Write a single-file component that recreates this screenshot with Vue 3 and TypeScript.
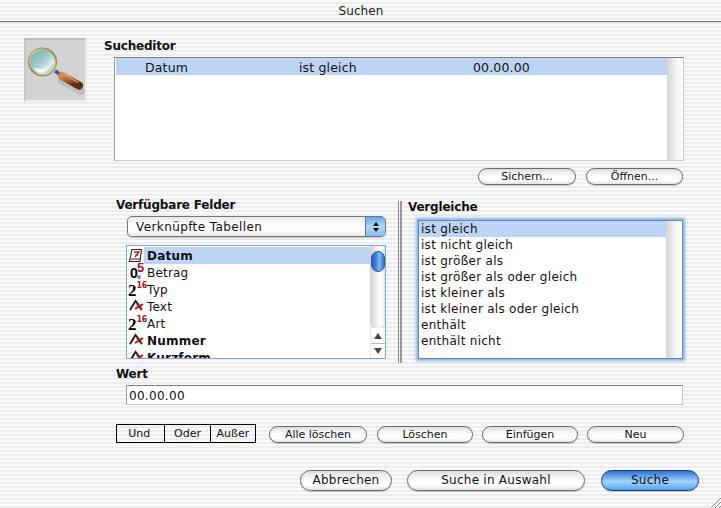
<script setup lang="ts">
type Kind = 'cal' | 'num' | 'int' | 'txt'
interface Field { name: string; kind: Kind; bold?: boolean; selected?: boolean }

const fields: Field[] = [
  { name: 'Datum', kind: 'cal', bold: true, selected: true },
  { name: 'Betrag', kind: 'num' },
  { name: 'Typ', kind: 'int' },
  { name: 'Text', kind: 'txt' },
  { name: 'Art', kind: 'int' },
  { name: 'Nummer', kind: 'txt', bold: true },
  { name: 'Kurzform', kind: 'txt', bold: true },
]

const comparisons = [
  'ist gleich',
  'ist nicht gleich',
  'ist größer als',
  'ist größer als oder gleich',
  'ist kleiner als',
  'ist kleiner als oder gleich',
  'enthält',
  'enthält nicht',
]

const logic = ['Und', 'Oder', 'Außer']
</script>

<template>
  <div class="window">
    <header class="titlebar">Suchen</header>

    <section class="top">
      <div class="icon-well">
        <svg width="63" height="63" viewBox="0 0 63 63">
          <defs>
            <linearGradient id="lens" x1="0" y1="0" x2="1" y2="1">
              <stop offset="0" stop-color="#6fa5a3" />
              <stop offset="0.45" stop-color="#9fc9cb" />
              <stop offset="0.7" stop-color="#d6ebeb" />
              <stop offset="1" stop-color="#7fadad" />
            </linearGradient>
            <linearGradient id="rim" x1="0" y1="0" x2="1" y2="1">
              <stop offset="0" stop-color="#f2e6a8" />
              <stop offset="0.5" stop-color="#a88f4a" />
              <stop offset="1" stop-color="#e8d68c" />
            </linearGradient>
            <linearGradient id="copper" x1="0" y1="0" x2="0.4" y2="1">
              <stop offset="0" stop-color="#d98a55" />
              <stop offset="0.6" stop-color="#a4562a" />
              <stop offset="1" stop-color="#5e2c12" />
            </linearGradient>
          </defs>
          <path d="M38 42 L57 53" stroke="#a4a4a4" stroke-width="8" stroke-linecap="round" opacity="0.45" />
          <path d="M31 33 L37 37" stroke="#2f5f9c" stroke-width="3.5" />
          <path d="M38 38 L55 47.5" stroke="url(#copper)" stroke-width="8" stroke-linecap="round" />
          <path d="M41 37 L54 44.5" stroke="#e6a77c" stroke-width="1.2" stroke-linecap="round" opacity="0.8" />
          <circle cx="18.5" cy="24" r="13.2" fill="url(#lens)" stroke="url(#rim)" stroke-width="1.7" />
          <circle cx="18.5" cy="24" r="14.2" fill="none" stroke="#6b5d30" stroke-width="0.6" />
          <path d="M9 29 Q18 34 27 27 Q21 36 13 34 Z" fill="#f4fafa" opacity="0.9" />
        </svg>
      </div>
      <div class="editor">
        <h2 class="label low">Sucheditor</h2>
        <div class="query-box">
          <div class="query-rows">
            <div class="query-row">
              <span class="q1">Datum</span>
              <span class="q2">ist gleich</span>
              <span class="q3">00.00.00</span>
            </div>
          </div>
          <div class="blank-scroll"></div>
        </div>
        <div class="editor-actions">
          <button class="btn small w98">Sichern...</button>
          <button class="btn small w97">Öffnen...</button>
        </div>
      </div>
    </section>

    <section class="middle">
      <div class="fields-col">
        <h2 class="label">Verfügbare Felder</h2>
        <div class="select">
          <span class="select-text">Verknüpfte Tabellen</span>
          <span class="select-arrows"><i class="tri up"></i><i class="tri down"></i></span>
        </div>
        <div class="field-list">
          <div class="field-rows">
            <div v-for="f in fields" :key="f.name" class="field-row">
              <span class="type-icon">
                <svg v-if="f.kind === 'cal'" width="18" height="17" viewBox="0 0 18 17">
                  <path d="M5 2.5H14.5L13 14.5H2.5Z" fill="#fff" stroke="#222" stroke-width="1.1" />
                  <path d="M4 12H13" stroke="#222" stroke-width="1" />
                  <path d="M7 5H12L8 10M8.5 8H11" fill="none" stroke="#b01818" stroke-width="1.3" />
                </svg>
                <span v-else-if="f.kind === 'num'" class="glyph-num">
                  <b>0</b><em>5</em><i class="dot"></i>
                </span>
                <span v-else-if="f.kind === 'int'" class="glyph-int">
                  <b>2</b><em>16</em>
                </span>
                <svg v-else width="18" height="17" viewBox="0 0 18 17">
                  <path d="M3 12 L8.5 3 L14 10" fill="none" stroke="#222" stroke-width="2" />
                  <path d="M8 11 L16 6 M10 6 L15 12" stroke="#a81818" stroke-width="2" />
                </svg>
              </span>
              <span class="field-name" :class="{ bold: f.bold, sel: f.selected }">{{ f.name }}</span>
            </div>
          </div>
          <div class="scrollbar">
            <div class="track"><div class="thumb"></div></div>
            <div class="arrow-btn"><i class="tri up dark"></i></div>
            <div class="arrow-btn"><i class="tri down dark"></i></div>
          </div>
        </div>
      </div>

      <div class="divider"></div>

      <div class="compare-col">
        <h2 class="label">Vergleiche</h2>
        <div class="compare-box">
          <div class="compare-rows">
            <div v-for="(c, i) in comparisons" :key="c" class="compare-row" :class="{ sel: i === 0 }">{{ c }}</div>
          </div>
          <div class="blank-scroll"></div>
        </div>
      </div>
    </section>

    <section class="value">
      <h2 class="label low">Wert</h2>
      <div class="value-input">00.00.00</div>
    </section>

    <section class="ops">
      <div class="logic">
        <span v-for="l in logic" :key="l" class="logic-cell">{{ l }}</span>
      </div>
      <button class="btn small w98 first">Alle löschen</button>
      <button class="btn small w96">Löschen</button>
      <button class="btn small w96 ein">Einfügen</button>
      <button class="btn small w97 neu">Neu</button>
    </section>

    <footer class="footer">
      <button class="btn large abbr">Abbrechen</button>
      <button class="btn large auswahl">Suche in Auswahl</button>
      <button class="btn large primary">Suche</button>
    </footer>

    <div class="grip">
      <svg width="12" height="12" viewBox="0 0 12 12">
        <path d="M2 12L12 2M6 12L12 6M10 12L12 10" stroke="#8a8a8a" stroke-width="1" />
        <path d="M3 12L12 3M7 12L12 7" stroke="#fff" stroke-width="1" />
      </svg>
    </div>
  </div>
</template>

<style scoped>
* {
  box-sizing: border-box;
}
.window {
  position: relative;
  width: 721px;
  height: 508px;
  overflow: hidden;
  font-family: "DejaVu Sans", "Liberation Sans", sans-serif;
  font-size: 12px;
  color: #111;
  background: repeating-linear-gradient(to bottom, #fafafa 0 2px, #ededed 2px 4px);
}
.titlebar {
  height: 22px;
  border-bottom: 1px solid #6e6e6e;
  border-top-left-radius: 5px;
  border-top-right-radius: 5px;
  padding-left: 1px;
  text-align: center;
  line-height: 23px;
  color: #222;
  letter-spacing: 0.1px;
}
.label {
  margin: 0;
  height: 16px;
  line-height: 16px;
  font-size: 12px;
  font-weight: bold;
  letter-spacing: -0.2px;
  color: #111;
}
.label.low {
  line-height: 18px;
}
.top {
  display: flex;
  padding: 15px 37px 0 24px;
  height: 175px;
}
.icon-well {
  width: 63px;
  height: 64px;
  margin-top: 1px;
  background: #d2d2d2;
  border-top: 2px solid #bdbdbd;
  border-left: 2px solid #c6c6c6;
  border-right: 2px solid #ececec;
  border-bottom: 2px solid #efefef;
}
.icon-well svg {
  margin: -2px;
  display: block;
}
.editor {
  margin-left: 17px;
  flex: 1;
}
.query-box {
  display: flex;
  width: 570px;
  height: 104px;
  margin: 4px 0 0 10px;
  background: #fff;
  border: 1px solid #c9c9c9;
  border-top-color: #7f7f7f;
  border-left-color: #9a9a9a;
}
.query-rows {
  flex: 1;
  padding-left: 1px;
}
.query-row {
  display: grid;
  grid-template-columns: 154px 174px 1fr;
  padding-left: 29px;
  height: 17px;
  line-height: 20px;
  font-size: 12.5px;
  letter-spacing: 0.15px;
  background: #bdd5f4;
}
.blank-scroll {
  width: 16px;
  background: linear-gradient(to right, #d4d4d4, #f6f6f6 60%, #fff);
}
.editor-actions {
  display: flex;
  justify-content: flex-end;
  gap: 10px;
  margin: 7px 1px 0 0;
}
.btn {
  display: block;
  padding: 0;
  font-family: inherit;
  color: #111;
  border: 1px solid #6a6a6a;
  border-radius: 999px;
  background: linear-gradient(to bottom, #dcdcdc 0, #f4f4f4 30%, #fff 55%, #fff 75%, #e2e2e2 100%);
  box-shadow: 0 1px 1px rgba(0, 0, 0, 0.18);
  text-align: center;
}
.btn.small {
  height: 17px;
  line-height: 15px;
  font-size: 11px;
}
.btn.large {
  height: 21px;
  line-height: 19px;
  font-size: 12px;
  letter-spacing: 0.25px;
}
.w98 { width: 98px; }
.w97 { width: 97px; }
.w96 { width: 96px; }

.middle {
  display: flex;
  height: 168px;
  padding-left: 116px;
}
.fields-col {
  width: 270px;
}
.select {
  display: flex;
  width: 259px;
  height: 21px;
  margin: 3px 0 0 11px;
  border: 1px solid #777;
  border-radius: 5px;
  overflow: hidden;
  background: linear-gradient(to bottom, #e9e9e9, #fff 45%, #fff 70%, #e9e9e9);
  box-shadow: 0 1px 1px rgba(0, 0, 0, 0.2);
}
.select-text {
  flex: 1;
  padding-left: 8px;
  line-height: 20px;
  letter-spacing: 0.4px;
}
.select-arrows {
  display: flex;
  flex-direction: column;
  align-items: center;
  justify-content: center;
  gap: 2px;
  width: 20px;
  background: linear-gradient(to bottom, #6aa4ea, #b4d8f8 50%, #80bff5);
  border-left: 1px solid #4a78b8;
}
.tri {
  display: block;
  width: 0;
  height: 0;
  border-left: 3px solid transparent;
  border-right: 3px solid transparent;
}
.tri.up { border-bottom: 4px solid #111; }
.tri.down { border-top: 4px solid #111; }
.tri.dark.up { border-left-width: 4px; border-right-width: 4px; border-bottom: 6px solid #444; }
.tri.dark.down { border-left-width: 4px; border-right-width: 4px; border-top: 6px solid #444; }

.field-list {
  display: flex;
  width: 260px;
  height: 114px;
  margin: 8px 0 0 10px;
  background: #fff;
  border: 1px solid #88a2bf;
  overflow: hidden;
}
.field-rows {
  flex: 1;
  padding-top: 1px;
  overflow: hidden;
}
.field-row {
  display: flex;
  height: 17px;
}
.type-icon {
  position: relative;
  flex: none;
  width: 17px;
  height: 17px;
}
.type-icon svg {
  display: block;
}
.field-name {
  flex: 1;
  height: 17px;
  padding-left: 3px;
  line-height: 18px;
  letter-spacing: 0.2px;
}
.field-name.bold {
  font-weight: bold;
}
.field-name.sel {
  background: #bdd5f4;
}
.glyph-num,
.glyph-int {
  position: relative;
  display: flex;
  height: 17px;
}
.glyph-num b {
  display: block;
  margin: 2px 0 0 3px;
  width: 6px;
  font-size: 14px;
  line-height: 15px;
  font-weight: bold;
  color: #000;
  font-stretch: condensed;
  font-family: "Liberation Sans", sans-serif;
}
.glyph-num em {
  display: block;
  margin: -3px 0 0 1px;
  font-size: 13px;
  line-height: 13px;
  font-style: normal;
  font-weight: bold;
  color: #a81818;
  font-family: "Liberation Sans", sans-serif;
}
.glyph-num .dot {
  position: absolute;
  left: 10px;
  top: 11px;
  width: 4px;
  height: 4px;
  border-radius: 50%;
  background: #888;
}
.glyph-int b {
  display: block;
  margin: 2px 0 0 1px;
  font-size: 17px;
  line-height: 16px;
  color: #000;
  font-family: "Liberation Serif", serif;
}
.glyph-int em {
  display: block;
  margin: -1px 0 0 0;
  height: 11px;
  font-size: 8px;
  line-height: 11px;
  letter-spacing: -0.4px;
  font-style: normal;
  font-weight: bold;
  color: #a81818;
}
.scrollbar {
  flex: none;
  display: flex;
  flex-direction: column;
  width: 15px;
  border-left: 1px solid #e4e4e4;
}
.track {
  flex: 1;
  padding-top: 5px;
  background: linear-gradient(to right, #d4d4d4, #f4f4f4 45%, #fff 75%, #e6e6e6);
  border-bottom-left-radius: 8px;
  border-bottom-right-radius: 8px;
  box-shadow: 0 1px 2px rgba(0, 0, 0, 0.3);
}
.thumb {
  width: 14px;
  height: 21px;
  border: 1px solid #2a58a4;
  border-radius: 7px;
  background: linear-gradient(to right, #1f5fc0, #4a8fe0 40%, #7fb8f0 62%, #2c74d4);
}
.arrow-btn {
  display: flex;
  justify-content: center;
  align-items: center;
  height: 15px;
  background: #fff;
}
.arrow-btn + .arrow-btn {
  border-top: 1px solid #bbb;
}
.divider {
  width: 4px;
  height: 162px;
  margin: 4px 6px 0 12px;
  border-left: 1px solid #8a8a8a;
  border-right: 2px solid #9a9a9a;
  background: #f4f4f4;
}
.compare-col {
  padding-top: 2px;
}
.compare-box {
  display: flex;
  width: 265px;
  height: 139px;
  margin: 5px 0 0 10px;
  background: #fff;
  border: 1px solid #5b8dc4;
  box-shadow: 0 0 3px 2px #88b0dc;
}
.compare-rows {
  flex: 1;
}
.compare-row {
  height: 16px;
  line-height: 16px;
  padding-left: 2px;
  letter-spacing: 0.28px;
}
.compare-row.sel {
  background: #bdd5f4;
}
.value {
  padding-left: 116px;
}
.value-input {
  width: 557px;
  height: 20px;
  margin: 4px 0 0 10px;
  padding-left: 2px;
  line-height: 20px;
  background: #fff;
  border: 1px solid #c4c4c4;
  border-top-color: #7f7f7f;
  border-left-color: #a0a0a0;
  letter-spacing: 0.3px;
}
.ops {
  display: flex;
  align-items: flex-end;
  margin-top: 19px;
  padding-left: 116px;
}
.logic {
  display: flex;
  width: 140px;
  height: 19px;
  border: 1px solid #000;
}
.logic-cell {
  flex: 1;
  text-align: center;
  font-size: 11px;
  line-height: 17px;
}
.logic-cell:first-child {
  padding-right: 3px;
}
.logic-cell + .logic-cell {
  border-left: 1px solid #000;
}
.first { margin-left: 13px; }
.ops .w96 { margin-left: 10px; }
.ops .ein { margin-left: 9px; }
.ops .neu { margin-left: 9px; }
.footer {
  display: flex;
  margin-top: 27px;
  padding-left: 300px;
}
.abbr { width: 92px; }
.auswahl { width: 178px; margin-left: 15px; }
.btn.primary {
  width: 98px;
  margin-left: 16px;
  border-color: #1a3d84;
  background: linear-gradient(to bottom, #2a6fd0 0, #5fa0e8 25%, #a6d0f6 55%, #6cb8f6 85%, #4a9cec 100%);
}
.grip {
  position: absolute;
  right: 0;
  bottom: 0;
  width: 12px;
  height: 12px;
}
</style>
